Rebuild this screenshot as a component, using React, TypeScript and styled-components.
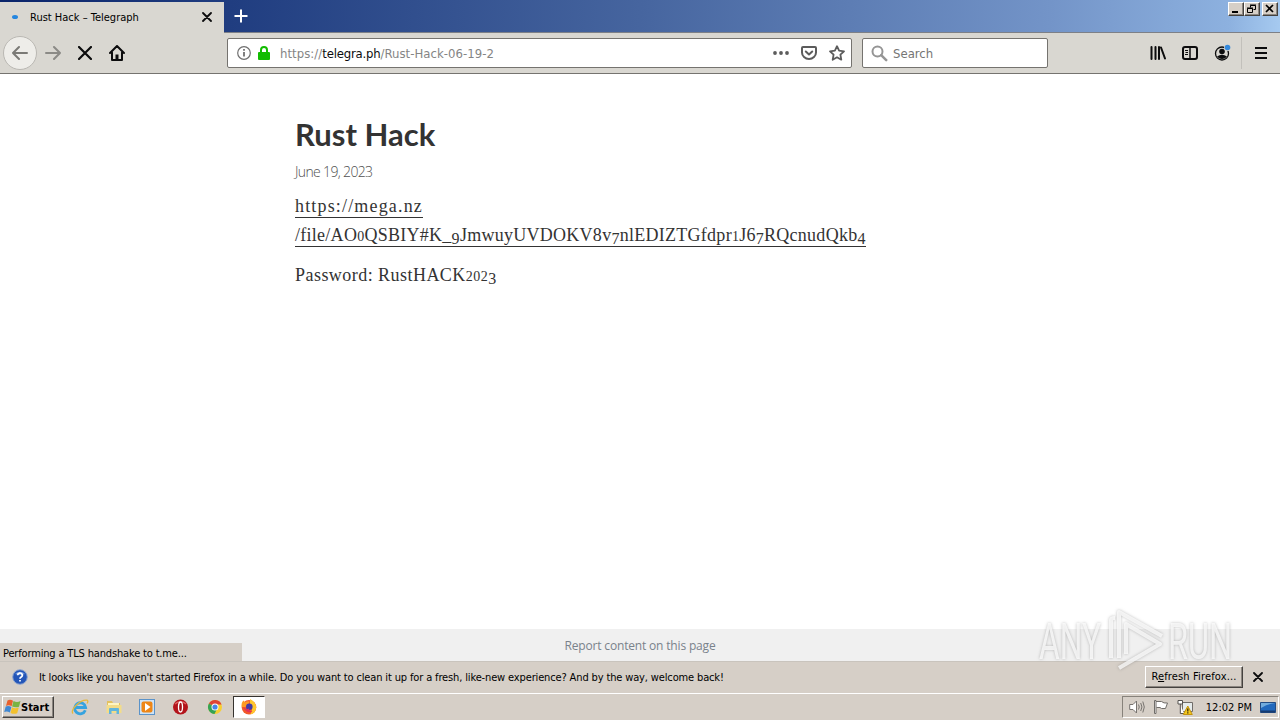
import { Fragment } from "react";
import styled, { createGlobalStyle, css } from "styled-components";

const theme = {
  toolbar: "#d9d7d1",
  classic: "#d6cfc7",
  ink: "#0c0c0d",
  border: "#75736f",
  text: "#333333",
  gray: "#79828b",
  ui: `"DejaVu Sans Condensed", "DejaVu Sans", sans-serif`,
};

export default function App() {
  return (
    <>
      <GlobalStyle />
      <Screen>
        <TitleBar>
          <Tab>
            <TabDot />
            <TabTitle>Rust Hack – Telegraph</TabTitle>
            <Cross size={10} />
          </Tab>
          <NewTab>
            <svg width="14" height="14" viewBox="0 0 14 14">
              <path d="M7 0.5v13M0.5 7h13" stroke="#fff" strokeWidth="2" />
            </svg>
          </NewTab>
          <WindowButtons>
            <WindowButton>
              <svg width="12" height="10"><path d="M2 8h6" stroke="#000" strokeWidth="2" /></svg>
            </WindowButton>
            <WindowButton>
              <svg width="12" height="10" fill="none" stroke="#000">
                <path d="M4.500 3.500V1.500h5v4H7.500M4 1h6M1.500 4.500h5v4h-5zM1 4h6" />
              </svg>
            </WindowButton>
            <WindowButton $gap>
              <svg width="12" height="10"><path d="M2 1l7 7M9 1L2 8" stroke="#000" strokeWidth="1.700" /></svg>
            </WindowButton>
          </WindowButtons>
        </TitleBar>

        <NavBar>
          <BackButton>
            <ArrowIcon />
          </BackButton>
          <NavIcon $width={32}>
            <ArrowIcon forward />
          </NavIcon>
          <NavIcon $width={32}>
            <Cross size={14} />
          </NavIcon>
          <NavIcon $width={32}>
            <HomeIcon />
          </NavIcon>

          <UrlBar>
            <InfoIcon />
            <LockIcon />
            <Url>
              https://<b>telegra.ph</b>/Rust-Hack-06-19-2
            </Url>
            <UrlActions>
              <svg width="16" height="16" fill="#5c5c5c">
                <circle cx="2" cy="8" r="1.900" />
                <circle cx="8" cy="8" r="1.900" />
                <circle cx="14" cy="8" r="1.900" />
              </svg>
              <svg width="16" height="16" fill="none" stroke="#5c5c5c" strokeWidth="2" strokeLinecap="round" strokeLinejoin="round">
                <path d="M2 2h12q1 0 1 1v4.500a7 6.500 0 0 1-14 0V3q0-1 1-1z" />
                <path d="M4.800 6.500L8 9.500l3.200-3" />
              </svg>
              <svg width="16" height="16" fill="none" stroke="#5c5c5c" strokeWidth="1.800" strokeLinejoin="round">
                <path d="M8 1.200l2.100 4.400 4.900.7-3.600 3.400.9 5L8 12.300l-4.300 2.400.9-5L1 6.300l4.900-.7z" />
              </svg>
            </UrlActions>
          </UrlBar>

          <SearchBar>
            <svg width="17" height="17" fill="none" stroke="#959595">
              <circle cx="6.500" cy="6.500" r="5" strokeWidth="2" />
              <path d="M10.200 10.200l5 5" strokeWidth="2.500" strokeLinecap="round" />
            </svg>
            <SearchText>Search</SearchText>
          </SearchBar>

          <ToolIcons>
            <NavIcon $width={32}>
              <svg width="16" height="16" stroke={theme.ink} strokeWidth="2" strokeLinecap="round">
                <path d="M1.500 2v12M5.500 2v12M9 2v12M11 2.500L15 13.500" fill="none" />
              </svg>
            </NavIcon>
            <NavIcon $width={32}>
              <svg width="16" height="16" fill="none" stroke={theme.ink}>
                <rect x="1" y="2" width="14" height="12" rx="2" strokeWidth="2" />
                <path d="M8 2v12" strokeWidth="1.500" />
                <path d="M3 5.500h3M3.500 7.500h2.500M3 9.500h3" />
              </svg>
            </NavIcon>
            <NavIcon $width={32}>
              <svg width="18" height="18">
                <circle cx="9" cy="9.500" r="6.500" fill="none" stroke={theme.ink} strokeWidth="1.300" />
                <circle cx="9" cy="7.500" r="2.800" fill={theme.ink} />
                <path d="M4 12.500Q9 9 14 12.500Q12 15 9 15T4 12.500z" fill={theme.ink} />
                <circle cx="14.500" cy="3.500" r="3.500" fill={theme.toolbar} />
                <circle cx="14.500" cy="3.500" r="2.800" fill="#3489dc" />
              </svg>
            </NavIcon>
            <Separator />
            <NavIcon $width={38}>
              <svg width="12" height="12" stroke={theme.ink} strokeWidth="2">
                <path d="M0 1h12M0 6h12M0 11h12" />
              </svg>
            </NavIcon>
          </ToolIcons>
        </NavBar>

        <Page>
          <Title>Rust Hack</Title>
          <PostDate>June 19, 2023</PostDate>
          <Paragraph>
            <Link $spacing={1.17}>https://mega.nz</Link>
            <br />
            <Link $spacing={0.27}>
              <OldStyle text="/file/AO0QSBIY#K_9JmwuyUVDOKV8v7nlEDIZTGfdpr1J67RQcnudQkb4" />
            </Link>
          </Paragraph>
          <Paragraph $gap={11}>
            <Password>
              <OldStyle text="Password: RustHACK2023" />
            </Password>
          </Paragraph>
        </Page>

        <PageFooter>
          <span>Report content on this page</span>
          <Status>Performing a TLS handshake to t.me...</Status>
        </PageFooter>

        <Notification>
          <QuestionIcon />
          <Message>
            It looks like you haven't started Firefox in a while. Do you want to clean it up for a fresh, like-new
            experience? And by the way, welcome back!
          </Message>
          <RefreshButton>
            R<u>e</u>fresh Firefox...
          </RefreshButton>
          <Cross size={10} />
        </Notification>

        <Taskbar>
          <StartButton>
            <WindowsFlag />
            <span>Start</span>
          </StartButton>
          <Launchers>
            <ExplorerIcon />
            <FolderIcon />
            <PlayerIcon />
            <OperaIcon />
            <ChromeIcon />
          </Launchers>
          <ActiveTask>
            <FirefoxIcon />
          </ActiveTask>
          <Tray>
            <SpeakerIcon />
            <FlagIcon />
            <NetworkIcon />
            <Clock>12:02 PM</Clock>
            <DesktopIcon />
          </Tray>
        </Taskbar>

        <Watermark />
      </Screen>
    </>
  );
}

// text figures: 0-2 sit at x-height, 3 4 5 7 9 hang below the baseline
function OldStyle({ text }: { text: string }) {
  return (
    <>
      {text.split(/([0-579])/).map((part, i) => {
        if (/^[012]$/.test(part)) return <SmallDigit key={i}>{part}</SmallDigit>;
        if (/^[34579]$/.test(part)) return <LowDigit key={i}>{part}</LowDigit>;
        return <Fragment key={i}>{part}</Fragment>;
      })}
    </>
  );
}

function Cross({ size }: { size: number }) {
  return (
    <svg width={size} height={size} viewBox={`0 0 ${size} ${size}`}>
      <path
        d={`M1 1L${size - 1} ${size - 1}M${size - 1} 1L1 ${size - 1}`}
        stroke={theme.ink}
        strokeWidth={size > 12 ? 2.2 : 1.8}
        strokeLinecap="round"
      />
    </svg>
  );
}

function ArrowIcon({ forward }: { forward?: boolean }) {
  return (
    <svg width="16" height="16" fill="none" stroke={forward ? "#8b8a86" : "#7b7a76"} strokeWidth="2" strokeLinecap="round" strokeLinejoin="round">
      <path d={forward ? "M1 8h14M9 2l6 6-6 6" : "M15 8H1M7 2L1 8l6 6"} />
    </svg>
  );
}

function HomeIcon() {
  return (
    <svg width="16" height="16" fill="none" stroke={theme.ink} strokeWidth="2" strokeLinecap="round" strokeLinejoin="round">
      <path d="M1 8l7-7 7 7M3 7.500V15h10V7.500" />
      <path d="M8 14V9.500" strokeWidth="3" strokeLinecap="butt" />
    </svg>
  );
}

function InfoIcon() {
  return (
    <svg width="14" height="14">
      <circle cx="7" cy="7" r="6.300" fill="none" stroke="#707070" strokeWidth="1.200" />
      <path d="M7 6v4.500M7 3v1.700" stroke="#606060" strokeWidth="1.600" />
    </svg>
  );
}

function LockIcon() {
  return (
    <svg width="12" height="14">
      <rect x="0" y="6" width="12" height="8" rx="1" fill="#12bc00" />
      <path d="M3 7V4a3 3 0 0 1 6 0v3" fill="none" stroke="#12bc00" strokeWidth="2" />
    </svg>
  );
}

function QuestionIcon() {
  return (
    <svg width="16" height="16">
      <circle cx="8" cy="8" r="7.300" fill="#2456b8" stroke="#8ea5cf" />
      <path d="M3 5a6 5 0 0 1 10 0Q8 7 3 5z" fill="#6c94dc" />
      <path d="M5.700 6.200a2.300 2.100 0 1 1 3.500 1.700Q8 8.600 8 9.700M8 11v1.600" fill="none" stroke="#fff" strokeWidth="1.700" />
    </svg>
  );
}

function WindowsFlag() {
  return (
    <svg width="17" height="16">
      <path d="M3.500 1.500Q6 0 9 1.700L7.600 7.300Q5 5.500 2 7z" fill="#e8602c" />
      <path d="M9.500 2Q13 4 16.500 2L15 7.800Q11.500 9 8.100 7.500z" fill="#79b342" />
      <path d="M1.700 7.500Q4.500 6.200 7.400 8L5.900 13.500Q3 11.800.2 13z" fill="#3f87d2" />
      <path d="M8 8.300Q11 10 14.800 8.500L13.200 14.200Q10 15.500 6.500 13.900z" fill="#f3c12d" />
    </svg>
  );
}

function ExplorerIcon() {
  return (
    <svg width="18" height="18" fill="none">
      <path d="M14.300 12.200A5.500 5.500 0 1 1 14.600 9.500H5" stroke="#36a3df" strokeWidth="2.800" />
      <path d="M2 15.500C-1 12 9 1.500 16 2.200q1.700.8 0 3.300" stroke="#e5b83c" strokeWidth="1.300" />
    </svg>
  );
}

function FolderIcon() {
  return (
    <svg width="18" height="18">
      <path d="M2 3h5l1 2h7v10H2z" fill="#e3c15f" />
      <path d="M3 5h11v3H3z" fill="#fff5c2" />
      <path d="M1.500 7h15v8h-15z" fill="#f3dc89" />
      <path d="M4 16v-5q0-1 1-1h8q1 0 1 1v5h-2.500v-3h-5v3z" fill="#62b5dc" />
    </svg>
  );
}

function PlayerIcon() {
  return (
    <svg width="18" height="18">
      <rect x="1.500" y="1.500" width="15" height="15" fill="#cfe3f5" stroke="#5b93c9" />
      <rect x="3.500" y="3.500" width="11" height="11" rx="2" fill="#ee8616" />
      <path d="M7 5l5.500 4L7 13z" fill="#fff" />
    </svg>
  );
}

function OperaIcon() {
  return (
    <svg width="18" height="18">
      <circle cx="8.500" cy="9" r="7.500" fill="#b3141b" />
      <path d="M3 6a7 6 0 0 1 11 0" fill="none" stroke="#dc6060" strokeWidth="1.500" />
      <ellipse cx="8.500" cy="9" rx="2" ry="5" fill="#a50f17" stroke="#fff" strokeWidth="1.300" />
    </svg>
  );
}

function ChromeIcon() {
  return (
    <svg width="18" height="18">
      <circle cx="9" cy="9" r="7" fill="#f7cf31" />
      <path d="M9 9L2.900 5.500A7 7 0 0 1 15.600 6.500H9z" fill="#df4435" />
      <path d="M9 9L2.900 5.500A7 7 0 0 0 8.500 16L11 11z" fill="#35a355" />
      <circle cx="9" cy="9" r="3.500" fill="#fff" />
      <circle cx="9" cy="9" r="2.600" fill="#4886e8" />
    </svg>
  );
}

function FirefoxIcon() {
  return (
    <svg width="18" height="18">
      <circle cx="9" cy="9.300" r="7.300" fill="#f2592a" />
      <path d="M10 1q6 3 6.200 8.500a7 7 0 0 1-6 7Q14 11 10 7.500z" fill="#ffc72e" />
      <path d="M1.700 9Q1 4.500 3.500 2.500L5 4.300Q7 3 9.500 3.500L8 8l-3 1z" fill="#ff9a22" />
      <circle cx="9.300" cy="8.800" r="3.300" fill="#443aa8" />
      <path d="M3 9q3 3 6 1.500 0 3 3.500 2.500-5 4-9.500-4z" fill="#e2315a" />
    </svg>
  );
}

function SpeakerIcon() {
  return (
    <svg width="16" height="16" fill="none" stroke="#77736f">
      <path d="M.7 5.500H4L7.500 2v12L4 10.500H.7z" fill="#fff" />
      <path d="M9.500 5.500q1.500 2.500 0 5M11.700 4q2.500 4 0 8M13.800 2.500q3 5.500 0 11" />
    </svg>
  );
}

function FlagIcon() {
  return (
    <svg width="16" height="16" fill="#fff" stroke="#706d69">
      <path d="M2.500 2.500h6q2 2 6 1.500L12.500 9.500h-4l-1.500-1H3.500" />
      <path d="M1.500 1.500h1.500v13H1.500z" />
    </svg>
  );
}

function NetworkIcon() {
  return (
    <svg width="17" height="16">
      <path d="M5.500 3.500h10v9h-10z" fill="#e6ecec" stroke="#706d69" />
      <path d="M1 1.500h4.500v3.500H1zM3.300 5v9.500H7" fill="#fff" stroke="#55524f" />
      <path d="M10.800 7l4.500 8.500h-9z" fill="#f4c81d" stroke="#c4930e" />
      <path d="M10.800 9.500v3M10.800 13.300v1.200" stroke="#392c09" strokeWidth="1.300" />
    </svg>
  );
}

function DesktopIcon() {
  return (
    <svg width="16" height="15">
      <path d="M.5 2.500h15v10H.5z" fill="#2269bd" stroke="#244c83" />
      <path d="M1 8Q7 4 15 3H1z" fill="#72acdd" />
      <path d="M1 10.500h14v2H1z" fill="#173b70" />
    </svg>
  );
}

function Watermark() {
  return (
    <WatermarkSvg viewBox="0 0 220 72">
      <g fontFamily="Roboto, sans-serif" fontSize="50" fill="#fff" fillOpacity=".75">
        <text x="3" y="51" textLength="62" lengthAdjust="spacingAndGlyphs">ANY</text>
        <text x="132" y="51" textLength="64" lengthAdjust="spacingAndGlyphs">RUN</text>
      </g>
      <g fill="none" stroke="#fff" strokeOpacity=".75" strokeWidth="4" strokeLinejoin="round">
        <path d="M75 50V12q0-2 4-2M83 50V4L126 28M90 46V16L124 36L83 60" />
      </g>
    </WatermarkSvg>
  );
}

const GlobalStyle = createGlobalStyle`
  * {
    box-sizing: border-box;
  }

  body {
    margin: 0;
    overflow: hidden;
  }

  svg {
    display: block;
    flex-shrink: 0;
  }
`;

const raised = css`
  background: ${theme.classic};
  border: 1px solid;
  border-color: #fff #45423f #45423f #fff;
  box-shadow: inset -1px -1px #8b8680;
`;

const Screen = styled.div`
  position: relative;
  width: 1280px;
  height: 720px;
  display: flex;
  flex-direction: column;
  background: #fff;
  font-family: ${theme.ui};
  font-size: 11px;
  color: #000;
  white-space: nowrap;
`;

const TitleBar = styled.header`
  height: 33px;
  display: flex;
  background: linear-gradient(92deg, #0a246a 0, #203d80 18%, #46659f 50%, #7394c8 82%, #8db1df 96%, #a6caf0 100%);
  border-bottom: 1px solid #7d8087;
`;

const Tab = styled.div`
  width: 224px;
  height: 31px;
  margin-top: 2px;
  padding: 0 12px 1px;
  display: flex;
  align-items: center;
  background: ${theme.toolbar};
`;

const TabDot = styled.i`
  width: 6px;
  height: 4px;
  border-radius: 50%;
  background: #2486e0;
`;

const TabTitle = styled.span`
  flex: 1;
  margin-left: 12px;
`;

const NewTab = styled.div`
  padding: 9px 10px;
`;

const WindowButtons = styled.div`
  display: flex;
  margin: 2px 2px 0 auto;
`;

const WindowButton = styled.div<{ $gap?: boolean }>`
  ${raised}
  width: 16px;
  height: 14px;
  padding: 1px;
  margin-left: ${({ $gap }) => ($gap ? "2px" : "0")};
`;

const NavBar = styled.nav`
  height: 41px;
  display: flex;
  align-items: center;
  padding-left: 3px;
  background: ${theme.toolbar};
  border-bottom: 1px solid ${theme.border};
`;

const BackButton = styled.div`
  width: 34px;
  height: 34px;
  display: grid;
  place-items: center;
  border: 1px solid #bab8b3;
  border-radius: 50%;
  background: #eeede9;
`;

const NavIcon = styled.div<{ $width: number }>`
  width: ${({ $width }) => $width}px;
  display: grid;
  place-items: center;
`;

const field = css`
  height: 30px;
  display: flex;
  align-items: center;
  background: #fff;
  border: 1px solid ${theme.border};
  border-radius: 2px;
`;

const UrlBar = styled.div`
  ${field}
  width: 625px;
  margin-left: 94px;
  padding: 0 6px 0 9px;
  gap: 7px;
`;

const Url = styled.span`
  margin-left: 3px;
  font-size: 13px;
  letter-spacing: 0.04px;
  color: #858585;

  b {
    font-weight: 400;
    letter-spacing: -0.2px;
    color: ${theme.ink};
  }
`;

const UrlActions = styled.div`
  margin-left: auto;
  display: flex;
  gap: 12px;
`;

const SearchBar = styled.div`
  ${field}
  width: 186px;
  margin-left: 10px;
  padding: 0 8px;
  gap: 5px;
`;

const SearchText = styled.span`
  font-size: 13px;
  color: #757575;
`;

const ToolIcons = styled.div`
  margin-left: auto;
  display: flex;
  align-items: center;
`;

const Separator = styled.i`
  width: 1px;
  height: 32px;
  margin-left: 3px;
  background: #c2c0bb;
`;

const Page = styled.main`
  height: 555px;
  padding: 41px 295px 0;
  color: ${theme.text};
`;

const Title = styled.h1`
  margin: 0;
  font: 700 31px/38px Lato, sans-serif;
`;

const PostDate = styled.div`
  margin-top: 9px;
  font: 300 14px/20px "Open Sans", sans-serif;
  letter-spacing: -0.65px;
  color: #505050;
`;

const Paragraph = styled.p<{ $gap?: number }>`
  margin: ${({ $gap = 10 }) => $gap}px 0 0;
  font: 18px/29px "Liberation Serif", serif;
`;

const Link = styled.a<{ $spacing: number }>`
  padding-bottom: 1px;
  border-bottom: 1px solid ${theme.text};
  letter-spacing: ${({ $spacing }) => $spacing}px;
`;

const SmallDigit = styled.span`
  font-size: 14px;
  line-height: 0;
`;

const LowDigit = styled.span`
  font-size: 16px;
  line-height: 0;
  vertical-align: -3px;
`;

const Password = styled.span`
  letter-spacing: 0.46px;
`;

const PageFooter = styled.footer`
  position: relative;
  height: 32px;
  display: flex;
  align-items: center;
  justify-content: center;
  padding-top: 1px;
  background: #f0f0f0;
  font: 12px "Open Sans", sans-serif;
  letter-spacing: -0.17px;
  color: ${theme.gray};
`;

/* floats over the page while a connection is pending */
const Status = styled.div`
  position: absolute;
  left: 0;
  bottom: 0;
  width: 242px;
  height: 18px;
  padding-left: 3px;
  background: ${theme.classic};
  font: 11px/21px ${theme.ui};
  letter-spacing: -0.16px;
  color: #000;
`;

const Notification = styled.div`
  height: 32px;
  display: flex;
  align-items: center;
  padding: 0 17px 1px 12px;
  background: ${theme.classic};
  border-top: 1px solid #c9c4bd;
`;

const Message = styled.span`
  margin-left: 11px;
  letter-spacing: -0.14px;
`;

const RefreshButton = styled.div`
  ${raised}
  width: 98px;
  height: 22px;
  margin: 0 10px 1px auto;
  line-height: 19px;
  letter-spacing: 0.15px;
  text-align: center;
`;

const Taskbar = styled.div`
  height: 27px;
  display: flex;
  align-items: center;
  padding: 0 1px 0 2px;
  background: ${theme.classic};
  border-top: 1px solid #fff;
`;

const StartButton = styled.div`
  ${raised}
  width: 52px;
  height: 22px;
  display: flex;
  align-items: center;
  padding-left: 1px;
  font-weight: 700;
`;

const Launchers = styled.div`
  display: flex;
  gap: 15.7px;
  margin-left: 17px;
`;

const ActiveTask = styled.div`
  width: 32px;
  height: 22px;
  display: grid;
  place-items: center;
  margin-left: 9px;
  background: #fff;
  border: 1px solid;
  border-color: #36332f #fff #fff #36332f;
`;

const Tray = styled.div`
  width: 157px;
  height: 22px;
  margin-left: auto;
  display: flex;
  align-items: center;
  padding: 0 2px 0 6px;
  gap: 8px;
  border: 1px solid;
  border-color: #87827b #fff #fff #87827b;
`;

const Clock = styled.span`
  margin-left: auto;
`;

const WatermarkSvg = styled.svg`
  position: absolute;
  left: 1036px;
  top: 608px;
  width: 220px;
  height: 72px;
  pointer-events: none;
  filter: drop-shadow(0 0 1.5px rgba(90, 90, 90, 0.5));
`;
